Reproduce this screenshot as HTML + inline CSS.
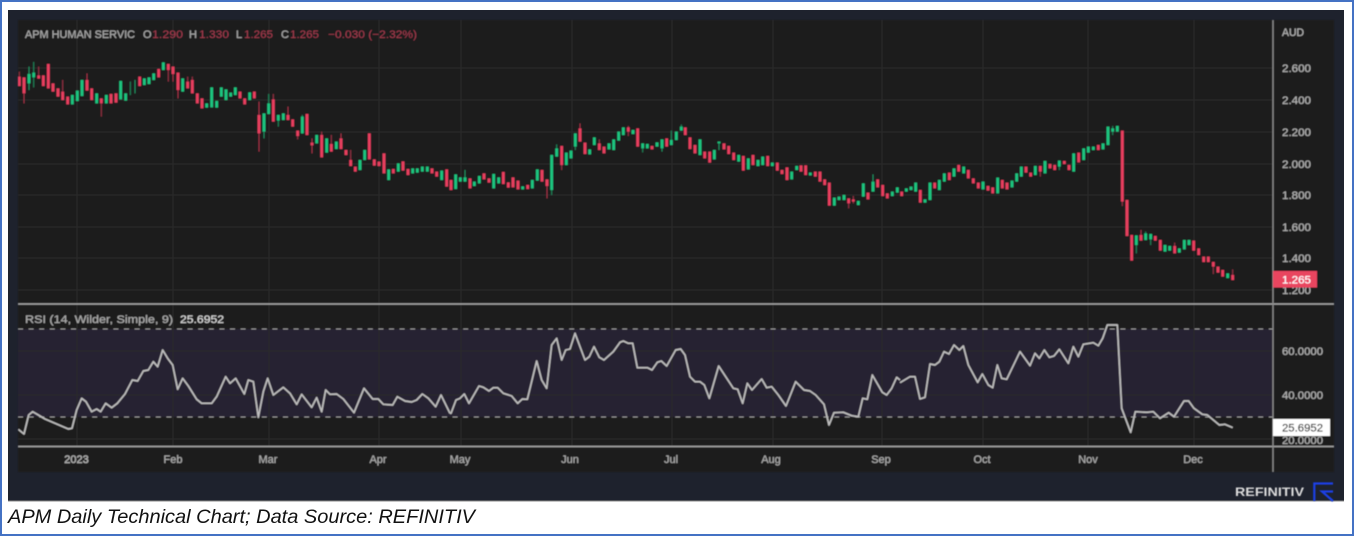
<!DOCTYPE html>
<html><head><meta charset="utf-8"><title>APM Daily Technical Chart</title>
<style>html,body{margin:0;padding:0;background:#fff;width:1354px;height:536px;overflow:hidden}svg{display:block}text{font-family:"Liberation Sans",sans-serif}</style>
</head><body>
<svg width="1354" height="536" viewBox="0 0 1354 536" xmlns="http://www.w3.org/2000/svg">
<defs><filter id="b" x="-2%" y="-2%" width="104%" height="104%"><feGaussianBlur stdDeviation="0.65"/></filter></defs>
<rect width="1354" height="536" fill="#fff"/>
<rect x="1" y="1" width="1352" height="534" fill="none" stroke="#4472c4" stroke-width="2"/>
<rect x="8" y="10" width="1336" height="491" fill="#1e222d"/>
<rect x="8" y="500.5" width="1336" height="1" fill="#888"/>
<g filter="url(#b)">
<rect x="18" y="20" width="1316" height="452" fill="#1a1a1a"/>
<rect x="18" y="329" width="1255" height="88" fill="#282230"/>
<path d="M18 68H1273M18 100H1273M18 132H1273M18 164H1273M18 195H1273M18 227H1273M18 258H1273M18 290H1273M18 351H1273M18 395H1273M18 439H1273M77 20V446M173 20V446M269 20V446M379 20V446M461 20V446M572 20V446M672 20V446M773 20V446M882 20V446M983 20V446M1088 20V446M1194 20V446" stroke="#2b2b2b" stroke-width="1" fill="none"/>
<path d="M18 329H1273M18 417H1273" stroke="#9a9a9a" stroke-width="1" stroke-dasharray="5 5.6" fill="none"/>
<path d="M18 304H1334M18 446.500H1334" stroke="#a8a8a8" stroke-width="1.500" fill="none"/>
<path d="M1273 20V472" stroke="#8e8e8e" stroke-width="1.300" fill="none"/>

<g transform="scale(.33333)" fill="none">
<path stroke="#9c3346" stroke-width="3" d="M72 280V310M188 240V275M261 220V240M304 310V350M505 210V245M519 222V245M534 270V295M563 230V245M577 230V240M777 305V455M820 282V298M864 320V345M893 408V418M936 415V460M965 395V405M994 405V432M1023 400V415M1052 450V480M58 215V230M116 200V226"/>
<path stroke="#1c8a5e" stroke-width="3" d="M87 200V270M101 186V262M792 395V415M806 282V310M835 362V380M907 345V400M391 245V285M405 240V280"/>
<path stroke="#ea3f60" stroke-width="8.500" d="M58 230V258M72 232V280M116 226V236M130 226V258M145 192V265M159 250V275M174 265V290M188 275V300M203 290V313M261 240V272M275 265V300M304 295V310M333 282V310M348 280V308M419 230V258M476 207V232M505 192V210M519 200V222M534 218V270M563 245V265M577 240V280M592 280V310M606 295V325M720 275V295M734 295V313M763 275V295M777 345V400M820 298V365M864 345V360M878 358V380M893 392V408M921 342V405M936 428V436M965 405V472M994 432V455M1023 415V447M1038 450V465M1052 480V498M1066 500V515M1108 400V478M1123 478V497M1137 485V498M1152 460V520M1180 507V520M1209 484V512M1224 507V525M1296 505V520M1310 515V530M1340 508V560"/>
<path stroke="#1cc680" stroke-width="8.500" d="M87 222V250M101 218V232M217 285V313M232 272V303M246 240V288M290 280V310M319 285V310M362 243V298M377 280V302M433 235V255M447 232V252M461 220V240M490 187V210M548 235V275M620 310V323M635 262V322M650 303V323M664 262V290M678 268V300M692 278V290M706 262V285M749 277V300M792 340V395M806 310V342M835 345V362M850 340V360M907 350V400M950 405V430M980 415V458M1009 425V447M1080 480V510M1094 450V480M1166 508V540M1195 490V515M1238 505V520M1252 505V518M1267 500V515M1282 500V515M1325 512V540"/>
</g>

<g transform="translate(450 90) scale(.33333)" fill="none">
<path stroke="#9c3346" stroke-width="3" d="M291 288V325M335 225V240M390 100V115M448 148V160M535 108V138M1196 340V355M1210 318V340"/>
<path stroke="#1c8a5e" stroke-width="3" d="M45 240V275M305 300V315M320 163V175M376 170V180M578 175V187M636 175V185M664 122V150M694 104V110M807 160V180"/>
<path stroke="#ea3f60" stroke-width="8.500" d="M3 270V300M60 265V295M102 250V268M117 265V278M160 246V282M175 277V293M189 262V292M204 272V298M233 285V297M276 240V275M291 268V288M335 168V225M390 115V155M405 158V192M448 160V180M462 170V190M535 112V125M563 115V170M606 168V178M650 145V170M706 112V135M720 142V177M735 165V190M764 185V205M779 185V218M822 160V178M836 168V192M851 188V210M880 198V242M909 195V225M953 198V228M982 218V242M996 240V252M1011 232V270M1053 226V245M1067 226V255M1096 245V260M1110 245V275M1124 268V285M1138 278V347M1196 325V340M1210 328V335M1254 308V328M1283 268V292M1298 285V318M1312 310V325"/>
<path stroke="#1cc680" stroke-width="8.500" d="M17 253V297M31 262V275M45 262V275M73 275V288M88 258V280M131 252V295M146 262V280M218 289V298M247 270V295M262 238V272M305 195V300M320 175V200M349 188V225M363 182V205M376 130V170M419 178V193M433 142V165M477 160V178M491 148V180M506 125V152M520 112V135M549 120V132M578 160V175M592 162V175M621 157V170M636 148V175M664 150V165M679 125V150M694 110V122M750 148V195M793 180V208M807 155V160M866 195V215M895 205V238M924 210V228M938 200V225M967 218V228M1025 245V268M1040 228V240M1081 248V256M1153 323V347M1167 320V330M1182 315V330M1225 333V345M1240 280V320M1269 275V305M1327 305V318M1342 292V308"/>
<path stroke="#1c8a5e" stroke-width="3" d="M1269 253V275"/>
</g>

<g transform="translate(900 0) scale(.33333)" fill="none">
<path stroke="#9c3346" stroke-width="3" d="M421 515V530M667 605V618M723 690V705M824 728V738M940 800V822M998 808V825"/>
<path stroke="#1c8a5e" stroke-width="3" d="M478 500V510M638 378V405M709 735V760M737 695V700M752 718V735"/>
<path stroke="#ea3f60" stroke-width="8.500" d="M5 575V588M61 570V608M104 548V565M148 518V540M176 495V515M205 510V535M220 535V550M235 548V565M264 558V572M278 562V580M307 540V565M321 548V568M378 500V518M392 518V530M421 498V515M450 492V505M464 495V510M493 483V492M507 495V510M536 458V487M595 435V450M667 392V605M681 600V708M695 705V782M723 705V722M766 708V722M781 720V752M824 738V760M881 722V752M896 745V765M911 770V786M925 770V786M940 786V800M954 800V818M968 810V830M998 825V840"/>
<path stroke="#1cc680" stroke-width="8.500" d="M19 565V575M33 560V570M47 548V575M75 598V608M90 548V600M118 540V570M133 520V545M162 505V530M191 500V520M249 545V568M293 533V580M336 542V562M350 520V545M364 500V530M406 498V525M435 483V520M478 482V500M521 460V515M551 445V480M565 440V458M580 440V450M609 430V448M624 380V435M638 385V395M652 378V395M709 706V735M737 700V720M752 702V718M795 735V755M809 738V752M838 745V758M853 720V748M867 720V735M983 820V834"/>
</g>

<g fill="none" stroke="#bdbdbd" stroke-width="5" stroke-linejoin="round">
<polyline transform="translate(0 300) scale(.33333)" points="55,388 72,402 86,345 98,335 115,345 135,357 170,372 205,387 216,385 230,330 245,295 258,305 275,335 290,327 302,335 317,310 335,323 352,310 375,282 397,240 413,243 430,213 445,210 460,185 473,200 488,150 503,175 518,195 533,268 548,235 565,258 590,298 605,310 635,310 650,290 677,230 690,250 707,235 733,282 745,240 760,245 775,352 790,275 803,235 820,285 850,262 870,280 890,313 905,283 935,322 950,293 965,335 977,270 990,283 1010,282 1030,297 1062,338 1092,265 1118,297 1135,297 1150,313 1178,315 1192,290 1215,303 1235,306 1250,300 1267,282 1285,295 1307,320 1323,285 1350,340"/>
<polyline transform="translate(450 300) scale(.33333)" points="0,340 3,340 18,300 30,295 43,282 57,310 87,258 100,262 117,273 130,263 143,263 160,280 185,288 203,310 217,297 232,298 260,183 275,240 290,265 305,135 320,115 335,180 347,150 360,147 375,100 405,180 418,170 432,140 448,172 462,180 490,155 510,127 520,123 535,130 548,130 562,203 592,203 606,210 622,187 634,183 650,198 677,150 692,147 705,165 720,230 735,245 750,245 763,255 778,295 806,198 850,265 863,268 878,310 892,250 906,270 935,237 950,263 965,260 985,285 1008,318 1037,245 1062,270 1080,273 1097,285 1122,313 1137,375 1152,338 1180,337 1205,347 1225,350 1238,295 1252,298 1267,225 1297,277 1310,285 1325,265 1340,232 1350,240"/>
<polyline transform="translate(900 300) scale(.33333)" points="0,248 30,230 45,230 60,297 75,292 90,192 105,195 118,185 132,155 147,162 162,135 178,150 190,138 205,195 233,247 247,222 265,255 278,263 292,195 305,235 320,238 360,155 390,197 405,160 418,175 433,150 448,172 462,168 478,148 505,190 520,140 535,170 550,133 580,128 595,137 608,115 622,75 652,75 665,325 692,397 706,335 740,337 760,335 780,355 806,338 822,350 852,303 866,303 882,325 907,343 922,345 958,375 975,373 998,383"/>
</g>

<g font-size="11" fill="#b4b4b4" stroke="#b4b4b4" stroke-width=".2">
<text x="25" y="38" textLength="110" lengthAdjust="spacingAndGlyphs" fill="#a5a5a5">APM HUMAN SERVIC</text>
<text x="143" y="38" fill="#a5a5a5">O</text><text x="152" y="38" textLength="31" lengthAdjust="spacingAndGlyphs" fill="#a63c50" stroke="none">1.290</text>
<text x="189" y="38" fill="#a5a5a5">H</text><text x="199" y="38" textLength="30" lengthAdjust="spacingAndGlyphs" fill="#a63c50" stroke="none">1.330</text>
<text x="236" y="38" fill="#a5a5a5">L</text><text x="244" y="38" textLength="29" lengthAdjust="spacingAndGlyphs" fill="#a63c50" stroke="none">1.265</text>
<text x="281" y="38" fill="#a5a5a5">C</text><text x="290" y="38" textLength="29" lengthAdjust="spacingAndGlyphs" fill="#a63c50" stroke="none">1.265</text>
<text x="328" y="38" textLength="89" lengthAdjust="spacingAndGlyphs" fill="#a63c50" stroke="none">−0.030 (−2.32%)</text>

<text x="1282" y="36" textLength="22" lengthAdjust="spacingAndGlyphs">AUD</text>
<text x="1282" y="72" textLength="29" lengthAdjust="spacingAndGlyphs">2.600</text>
<text x="1282" y="104" textLength="29" lengthAdjust="spacingAndGlyphs">2.400</text>
<text x="1282" y="136" textLength="29" lengthAdjust="spacingAndGlyphs">2.200</text>
<text x="1282" y="168" textLength="29" lengthAdjust="spacingAndGlyphs">2.000</text>
<text x="1282" y="199" textLength="29" lengthAdjust="spacingAndGlyphs">1.800</text>
<text x="1282" y="231" textLength="29" lengthAdjust="spacingAndGlyphs">1.600</text>
<text x="1282" y="262" textLength="29" lengthAdjust="spacingAndGlyphs">1.400</text>
<text x="1282" y="294" textLength="29" lengthAdjust="spacingAndGlyphs">1.200</text>
<rect x="1273" y="271" width="44" height="16.500" fill="#e9445f" stroke="none"/>
<text x="1282" y="283.500" textLength="29" lengthAdjust="spacingAndGlyphs" fill="#fff" stroke="#fff">1.265</text>

<text x="25" y="323" textLength="148" lengthAdjust="spacingAndGlyphs" fill="#a8a8a8">RSI (14, Wilder, Simple, 9)</text>
<text x="180" y="323" textLength="44" fill="#d8d8d8" stroke="#d8d8d8" lengthAdjust="spacingAndGlyphs">25.6952</text>
<text x="1282" y="355" textLength="41" lengthAdjust="spacingAndGlyphs">60.0000</text>
<text x="1282" y="399" textLength="41" lengthAdjust="spacingAndGlyphs">40.0000</text>
<text x="1282" y="444" textLength="41" lengthAdjust="spacingAndGlyphs">20.0000</text>
<rect x="1273" y="419" width="57" height="17" fill="#fff" stroke="none"/>
<text x="1282" y="431.500" textLength="41" lengthAdjust="spacingAndGlyphs" fill="#333" stroke="#333">25.6952</text>

<g text-anchor="middle" fill="#a8a8a8">
<text x="76.500" y="463" stroke-width=".4">2023</text>
<text x="173" y="463">Feb</text>
<text x="268" y="463">Mar</text>
<text x="378" y="463">Apr</text>
<text x="460" y="463">May</text>
<text x="570" y="463">Jun</text>
<text x="671" y="463">Jul</text>
<text x="771" y="463">Aug</text>
<text x="881" y="463">Sep</text>
<text x="982" y="463">Oct</text>
<text x="1088" y="463">Nov</text>
<text x="1193" y="463">Dec</text>
</g>
</g>

<text x="1235" y="496" font-size="12" font-weight="bold" fill="#dcdcdc" textLength="69" lengthAdjust="spacingAndGlyphs">REFINITIV</text>
<path d="M1333 483.500H1314.300V501M1333 491.500H1322L1333 501" fill="none" stroke="#1a3fe6" stroke-width="2.200"/>
</g>
<text x="8" y="523" font-size="19.500" font-style="italic" fill="#111" textLength="467" lengthAdjust="spacingAndGlyphs">APM Daily Technical Chart; Data Source: REFINITIV</text>
</svg>
</body></html>
